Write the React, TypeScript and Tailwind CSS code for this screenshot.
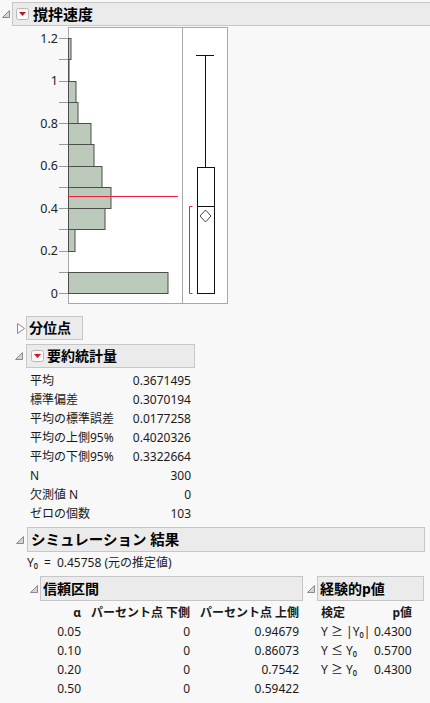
import React from 'react';

const FONT = { fontFamily: '"Noto Sans", "Noto Sans CJK JP", sans-serif' };

const OpenTri = () => (
  <svg width="8" height="8" viewBox="0 0 8 8">
    <polygon points="7.5,0.5 7.5,7.5 0.5,7.5" fill="#d4d4d4" stroke="#8a8a8a" strokeWidth="1" />
  </svg>
);

const ClosedTri = () => (
  <svg width="8" height="11" viewBox="0 0 8 11">
    <polygon points="0.5,0.5 7.5,5.5 0.5,10.5" fill="#ffffff" stroke="#8a8a8a" strokeWidth="1" />
  </svg>
);

const RedMenu = () => (
  <svg width="13" height="12" viewBox="0 0 13 12">
    <rect x="0.5" y="0.5" width="12" height="11" rx="2" fill="#fafafa" stroke="#b8b8b8" />
    <polygon points="3,4 10,4 6.5,8" fill="#d0101c" />
  </svg>
);

const stats = [
  ['平均', '0.3671495'],
  ['標準偏差', '0.3070194'],
  ['平均の標準誤差', '0.0177258'],
  ['平均の上側95%', '0.4020326'],
  ['平均の下側95%', '0.3322664'],
  ['N', '300'],
  ['欠測値 N', '0'],
  ['ゼロの個数', '103'],
];

const ci = [
  ['0.05', '0', '0.94679'],
  ['0.10', '0', '0.86073'],
  ['0.20', '0', '0.7542'],
  ['0.50', '0', '0.59422'],
];

const pv = [
  ['Y ≥ |Y₀|', '0.4300'],
  ['Y ≤ Y₀', '0.5700'],
  ['Y ≥ Y₀', '0.4300'],
];

// histogram bins: [lower bound, right edge x]
const bins: [number, number][] = [
  [0, 168], [0.2, 75], [0.3, 105], [0.4, 111], [0.5, 102], [0.6, 94],
  [0.7, 91], [0.8, 78], [0.9, 76], [1.0, 69], [1.1, 71],
];

const yv = (v: number) => 293 - v * 212.5;

const Chart = () => (
  <svg width="230" height="280" viewBox="0 26 230 280" className="block">
    <rect x="68.5" y="27.5" width="159" height="276" fill="#ffffff" stroke="#a8a8a8" />
    <line x1="182.5" y1="27.5" x2="182.5" y2="303.5" stroke="#a8a8a8" />
    {Array.from({ length: 13 }, (_, i) => (
      <line key={i} x1="59" x2="68" y1={Math.round(yv(i / 10)) + 0.5} y2={Math.round(yv(i / 10)) + 0.5} stroke="#9a9a9a" />
    ))}
    {['0', '0.2', '0.4', '0.6', '0.8', '1', '1.2'].map((t) => (
      <text key={t} x="58" y={yv(parseFloat(t)) + 4.5} textAnchor="end" fontSize="12.5" fill="#222" style={FONT}>{t}</text>
    ))}
    {bins.map(([lo, rx]) => {
      const top = Math.round(yv(lo + 0.1)) + 0.5;
      const bot = Math.round(yv(lo)) + 0.5;
      return <rect key={lo} x="68.5" y={top} width={rx - 68.5} height={bot - top} fill="#bccabc" stroke="#4d4d4d" />;
    })}
    <line x1="68" x2="178" y1="196.5" y2="196.5" stroke="#f0203c" />
    {/* box plot */}
    <line x1="205.5" x2="205.5" y1="55" y2="167" stroke="#111" />
    <line x1="196" x2="214" y1="55.5" y2="55.5" stroke="#111" />
    <rect x="197.5" y="167.5" width="17" height="126" fill="none" stroke="#111" />
    <line x1="197" x2="215" y1="206.5" y2="206.5" stroke="#111" />
    <polygon points="205.5,210 211,216 205.5,222 200,216" fill="none" stroke="#444" />
    <polyline points="192.5,206.5 189.5,206.5 189.5,293.5 192.5,293.5" fill="none" stroke="#f0203c" />
  </svg>
);

const App: React.FC = () => {
  return (
    <div className="w-[430px] h-[703px] overflow-hidden bg-[#f8f8f8] text-[#1a1a1a] text-[12px]" style={FONT}>
      {/* main header */}
      <div className="flex items-center pt-[2px]">
        <div className="w-[12px] pl-[2px] flex items-center"><OpenTri /></div>
        <div className="flex-1 -mr-[4px] h-[24px] border border-[#c6c6c6] bg-[#ebebeb] flex items-center gap-[4px] pl-[3px]">
          <RedMenu />
          <span className="text-[15px] font-bold text-black leading-none">撹拌速度</span>
        </div>
      </div>

      <Chart />

      {/* 分位点 */}
      <div className="flex items-center mt-[10px]">
        <div className="w-[26px] pl-[17px] flex items-center"><ClosedTri /></div>
        <div className="w-[57px] h-[24px] border border-[#c6c6c6] bg-[#ebebeb] flex items-center pl-[2px]">
          <span className="text-[14px] font-bold text-black leading-none">分位点</span>
        </div>
      </div>

      {/* 要約統計量 */}
      <div className="flex items-center mt-[4px]">
        <div className="w-[26px] pl-[15px] flex items-center"><OpenTri /></div>
        <div className="w-[169px] h-[24px] border border-[#c6c6c6] bg-[#ebebeb] flex items-center gap-[3px] pl-[4px]">
          <RedMenu />
          <span className="text-[14px] font-bold text-black leading-none">要約統計量</span>
        </div>
      </div>
      <div className="mt-[3px] ml-[30px] w-[161px]">
        {stats.map(([k, v]) => (
          <div key={k} className="h-[19px] flex items-center justify-between">
            <span>{k}</span>
            <span>{v}</span>
          </div>
        ))}
      </div>

      {/* シミュレーション 結果 */}
      <div className="flex items-center mt-[4px]">
        <div className="w-[27px] pl-[16px] flex items-center"><OpenTri /></div>
        <div className="w-[398px] h-[25px] border border-[#c6c6c6] bg-[#ebebeb] flex items-center pl-[3px]">
          <span className="text-[14.5px] font-bold text-black leading-none">シミュレーション 結果</span>
        </div>
      </div>
      <div className="mt-[2px] ml-[27px] h-[18px] flex items-center gap-[6px]">
        <span>Y₀</span>
        <span>=</span>
        <span>0.45758 (元の推定値)</span>
      </div>

      <div className="flex mt-[4px]">
        {/* 信頼区間 */}
        <div className="flex flex-col">
          <div className="flex items-center">
            <div className="w-[40px] pl-[30px] flex items-center"><OpenTri /></div>
            <div className="w-[263px] h-[25px] border border-[#c6c6c6] bg-[#ebebeb] flex items-center pl-[2px]">
              <span className="text-[14px] font-bold text-black leading-none">信頼区間</span>
            </div>
          </div>
          <div className="mt-[2px] ml-[40px] grid grid-cols-[41px_109px_109px] text-right">
            <div className="h-[19px] flex items-center justify-end font-bold">α</div>
            <div className="h-[19px] flex items-center justify-end font-bold">パーセント点 下側</div>
            <div className="h-[19px] flex items-center justify-end font-bold">パーセント点 上側</div>
            {ci.map((r) => r.map((c, j) => (
              <div key={r[0] + j} className="h-[19px] flex items-center justify-end">{c}</div>
            )))}
          </div>
        </div>

        {/* 経験的p値 */}
        <div className="flex flex-col">
          <div className="flex items-center">
            <div className="w-[14px] pl-[4px] flex items-center"><OpenTri /></div>
            <div className="w-[107px] h-[25px] border border-[#c6c6c6] bg-[#ebebeb] flex items-center pl-[2px]">
              <span className="text-[14px] font-bold text-black leading-none">経験的p値</span>
            </div>
          </div>
          <div className="mt-[2px] ml-[18px] w-[91px]">
            <div className="h-[19px] flex items-center justify-between font-bold">
              <span>検定</span>
              <span>p値</span>
            </div>
            {pv.map(([k, v]) => (
              <div key={v + k} className="h-[19px] flex items-center">
                <span className="w-[53px]">{k}</span>
                <span>{v}</span>
              </div>
            ))}
          </div>
        </div>
      </div>
    </div>
  );
};

export default App;
